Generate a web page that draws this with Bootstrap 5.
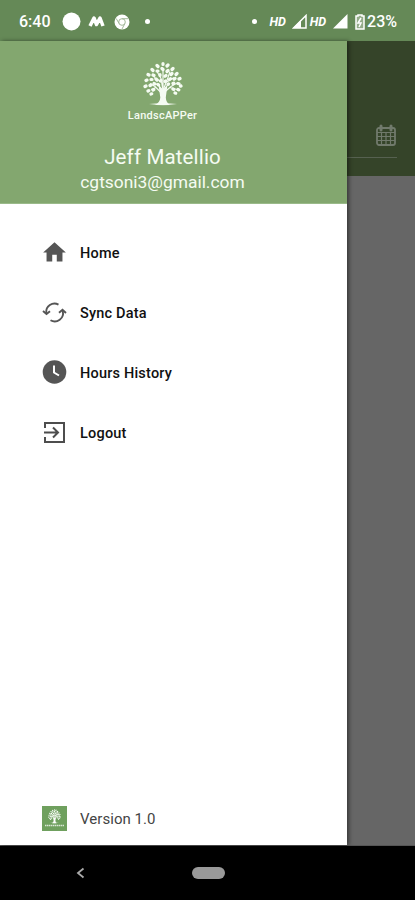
<!DOCTYPE html>
<html lang="en">
<head>
<meta charset="utf-8">
<meta name="viewport" content="width=device-width, initial-scale=1">
<title>LandscAPPer</title>
<link href="https://cdn.jsdelivr.net/npm/bootstrap@5.3.0/dist/css/bootstrap.min.css" rel="stylesheet">
<style>
body{font-family:Roboto,"Liberation Sans",sans-serif;color:#111;line-height:1.2}
svg{display:block;flex:none}
.phone{width:415px;height:900px}
.status-bar{height:41px;background:#658957;font-size:16px;font-weight:500;padding:2px 18px 0 19px}
.hd-label{font-size:12.5px;font-weight:700;font-style:italic;letter-spacing:-.1px}
.status-dot{width:5px;height:5px}
.drawer{width:347px;box-shadow:2px 0 4px rgba(0,0,0,.45);z-index:1}
.drawer-head{height:163px;background:#83a76f;color:#f5fbf2;padding:19px 22px 0 0;border-bottom:1px solid #9aba89}
.brand-name{font-size:11px;font-weight:500;line-height:13px;letter-spacing:.25px;margin-top:3px}
.user-name{font-size:20.5px;line-height:24px;letter-spacing:.15px;margin-top:23px}
.user-mail{font-size:17.4px;line-height:22px;margin-top:2px}
.menu{padding-top:18px}
.menu-row{height:60px;padding-left:42px;gap:13px;font-size:14.5px;font-weight:500;letter-spacing:.2px;color:#111}
.menu-row:hover{color:#111}
.menu-row span{padding-top:3px}
.version-text{padding-top:2px}
.version{height:54px;padding-left:42px;gap:13px;font-size:15px;color:#444;letter-spacing:.05px}
.version-tile{width:25px;height:25px;background:#6fa05e}
.dimmed{background:#666}
.dimmed-head{height:135px;background:#354429;padding:83px 18px 0 0}
.date-field{height:34px;border-bottom:1px solid #566150}
.nav-keys{height:55px;background:#000;border-top:1px solid #555;padding-left:75px;gap:105px}
.home-pill{width:33px;height:12px;background:#999}
</style>
<script src="https://cdn.jsdelivr.net/npm/bootstrap@5.3.0/dist/js/bootstrap.bundle.min.js"></script>
</head>
<body>
<svg width="0" height="0" class="position-absolute" aria-hidden="true">
<defs>
<symbol id="tree" viewBox="0 0 40 46">
<path fill="currentColor" d="M15.500 23 17.300 36Q17 41 12 43.500H27Q23 41 22.800 36L24.500 23 20 28Z"/>
<path d="M19 32 12 25 7 22M20 29 18 17 14 10M20 29 25 16 27 10M21 31 28 25 35 21M18 20 11 16M23 21 31 16M20 26V7M13 26 8 28M27 26 34 28" fill="none" stroke="currentColor" stroke-width="1.200"/>
<path d="M6 42.5Q20 40.500 34 42.500Q20 45 6 42.500" fill="currentColor" opacity=".7"/>
<g id="leaves" fill="none" stroke="currentColor" stroke-width="3.200" stroke-linecap="round">
<path d="M20 2v1M14 4l1 1M25 3.500l-1 1M9 8l1 1M30 7l-1 1M19 7l1 1M14 9.500h1M25 9l-1 1M5 13l1 .5M34 12l-1 1M10 13.500l1 .5M29 12l-1 1M17 13v1M23 14l-1 .8M3 19l1-.4M8 18h1M13 17.500l1 1M26.500 18l1-.8M32 17l-1 .7M37 17l-1 .5M18 19l-.5.6M22 20l.6-.5M2 25l1-.5M7 24l1-.5M11 22l1 .4M15 23l.6.5M25 23l.6-.5M30 22l.8-.4M35 22l1 .2M38 24.500l-.5.2M5 29.500l.8-.4M10 28.500l.8-.4M30 27.500l.7.4M35 28l.8.4M32 31.500l.7.200M8 32.500l.7-.2"/>
</g>
</symbol>
</defs>
</svg>
<div class="phone d-flex flex-column overflow-hidden">
<header class="status-bar d-flex align-items-center justify-content-between text-white">
<div class="d-flex align-items-center">
<span>6:40</span>
<svg width="19" height="19" style="margin-left:11px"><circle cx="9.500" cy="9.500" r="9" fill="#fff"/></svg>
<svg width="17" height="13" viewBox="0 0 17 13" style="margin-left:7px"><path d="M2 11 6 3 8.500 9.500 12 3 15 11" fill="none" stroke="#fff" stroke-width="3.500" stroke-linejoin="round"/></svg>
<svg width="16" height="16" viewBox="0 0 16 16" style="margin-left:9px"><circle cx="8" cy="8" r="7.500" fill="#fff"/><circle cx="8" cy="8" r="3.300" fill="none" stroke="#a3b99a" stroke-width="1"/><path d="M8 4.700H14M5.100 9.500 2.200 4.500M10.800 9.700 8 15" stroke="#a3b99a" stroke-width="1"/></svg>
<span class="status-dot rounded-circle bg-white" style="margin-left:15px"></span>
</div>
<div class="d-flex align-items-center">
<span class="status-dot rounded-circle bg-white me-2"></span>
<span class="hd-label" style="margin:0 6px 0 5px">HD</span>
<svg width="15" height="15" viewBox="0 0 15 15"><path d="M1.500 14H14V1.500Z" fill="none" stroke="#fff" stroke-width="1.500"/><path d="M1 14H9V6Z" fill="#fff"/></svg>
<span class="hd-label" style="margin:0 7px 0 3px">HD</span>
<svg width="15" height="15" viewBox="0 0 15 15"><path d="M0 14.500H14.500V0Z" fill="#fff"/></svg>
<svg width="10" height="16" viewBox="0 0 10 16" style="margin:0 2px 0 7px"><path d="M3 2V1H7V2H9V15H1V2Z" fill="#94ac89" stroke="#fff" stroke-width="1.500"/><path d="M6 4 3 9H6L4 13" fill="none" stroke="#fff" stroke-width="1.500"/></svg>
<span>23%</span>
</div>
</header>
<div class="d-flex flex-grow-1">
<aside class="drawer bg-white d-flex flex-column position-relative">
<div class="drawer-head d-flex flex-column align-items-center">
<svg width="40" height="46" viewBox="0 -1.500 40 46"><use href="#tree" width="40" height="46"/></svg>
<div class="brand-name">LandscAPPer</div>
<div class="user-name">Jeff Matellio</div>
<div class="user-mail">cgtsoni3@gmail.com</div>
</div>
<nav class="menu d-flex flex-column flex-grow-1">
<a href="#" class="menu-row d-flex align-items-center text-decoration-none"><svg width="25" height="25" viewBox="1 1 22 22" fill="#555"><path d="M10 20v-6h4v6h5v-8h3L12 3 2 12h3v8z"/></svg><span>Home</span></a>
<a href="#" class="menu-row d-flex align-items-center text-decoration-none"><svg width="25" height="25" viewBox="0 0 25 25" fill="none" stroke="#555" stroke-width="1.900"><path d="M4.300 13A8.300 8.300 0 0 1 16.500 4.600M20.700 11A8.300 8.300 0 0 1 8.500 20.300"/><path d="M1 11 4.500 14 8 11.300M17 12.700 20.500 9.700 24 13"/></svg><span>Sync Data</span></a>
<a href="#" class="menu-row d-flex align-items-center text-decoration-none"><svg width="25" height="25" viewBox="0 0 25 25"><circle cx="12.500" cy="12" r="11.800" fill="#555"/><path d="M12 5.500V12.500L17 15.500" fill="none" stroke="#fff" stroke-width="2"/></svg><span>Hours History</span></a>
<a href="#" class="menu-row d-flex align-items-center text-decoration-none"><svg width="25" height="25" viewBox="0 0 25 25" fill="none" stroke="#4d4d4d" stroke-width="2"><path d="M3 8V3H22V22H3V17M2 12.500H15M11 7.500 16 12.500 11 17.500"/></svg><span>Logout</span></a>
</nav>
<div class="version d-flex align-items-center"><span class="version-tile d-flex flex-column align-items-center justify-content-center text-white"><svg width="13" height="15"><use href="#tree"/></svg><svg width="19" height="3"><path d="M0 1.500H19" stroke="#fff" stroke-width="1.500" stroke-dasharray="1.500 .5" opacity=".75"/></svg></span><span class="version-text">Version 1.0</span></div>
</aside>
<main class="dimmed flex-grow-1">
<div class="dimmed-head">
<div class="date-field d-flex justify-content-end"><svg width="22" height="23" viewBox="0 0 22 23" fill="none" stroke="#717a6c"><rect x="2" y="4" width="18" height="17" rx="2" stroke-width="1.800"/><path d="M6 2V6M16 2V6" stroke-width="3" stroke-linecap="round"/><path d="M2 8.500H20M2 12.500H20M2 16.500H20M6.500 8V21M11 8V21M15.500 8V21" stroke-width="1.200"/></svg></div>
</div>
</main>
</div>
<footer class="nav-keys d-flex align-items-center">
<svg width="12" height="14" viewBox="0 0 12 14"><path d="M8.500 2.500 3 7 8.500 11.500" fill="none" stroke="#aaa" stroke-width="1.800"/></svg>
<span class="home-pill rounded-pill"></span>
</footer>
</div>
</body>
</html>
